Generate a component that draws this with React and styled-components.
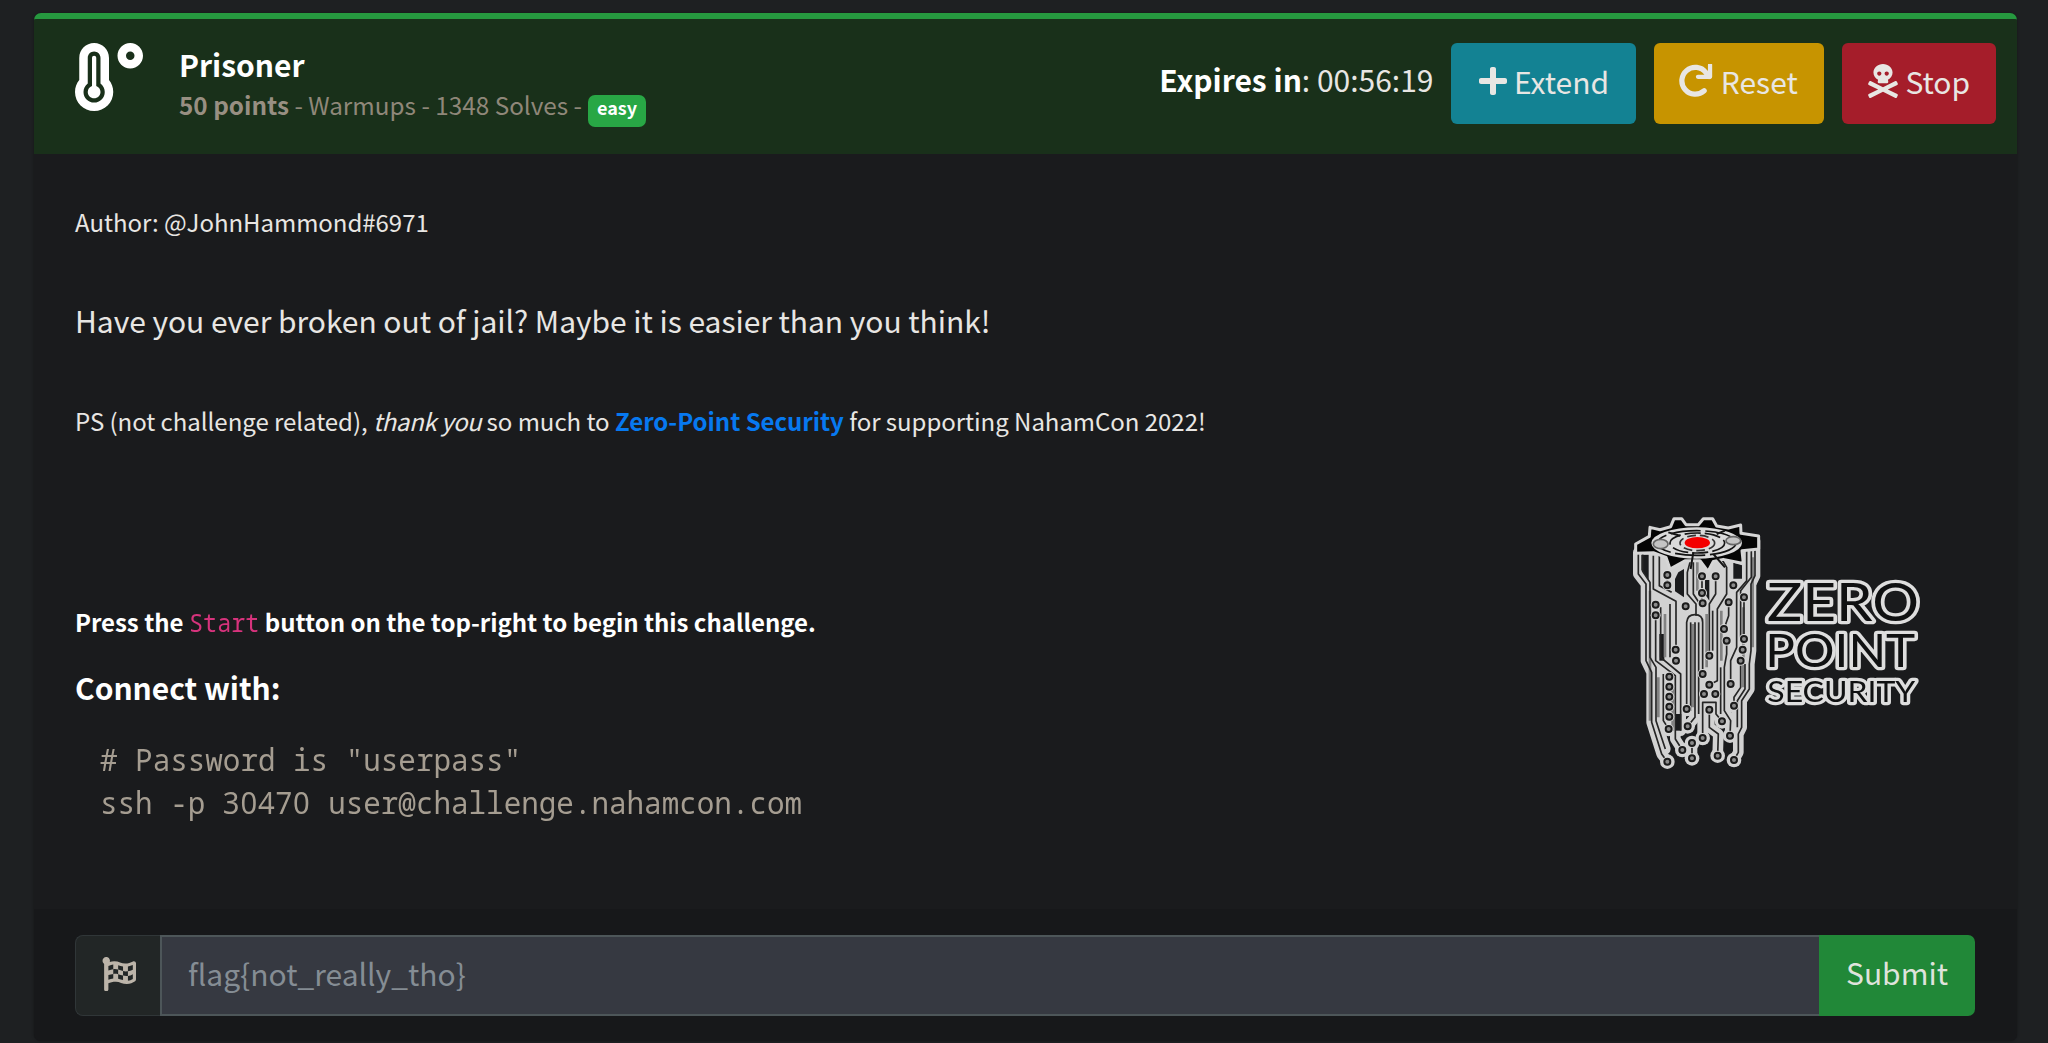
import React from "react";
import styled, { createGlobalStyle } from "styled-components";
import {
  FaTemperatureHigh,
  FaPlus,
  FaSkullCrossbones,
  FaFlagCheckered,
} from "react-icons/fa";

const GlobalStyle = createGlobalStyle`
  * { box-sizing: border-box; }
  body {
    margin: 0;
    height: 1043px;
    overflow: hidden;
    background: #1e2022;
    color: #e8e6e3;
    font-family: "Source Sans Pro", "Noto Sans CJK SC", sans-serif;
    font-size: 24px;
    line-height: 36px;
  }
`;

const Page = styled.main`
  height: 1043px;
  padding: 12.5px 31.5px 2px 33.5px;
`;

const Card = styled.article`
  display: flex;
  flex-direction: column;
  height: 100%;
  border-top: 6.5px solid #26983f;
  border-radius: 7px;
  background: #1a1b1d;
  box-shadow: 0 0 3px rgba(0, 0, 0, 0.35);
  overflow: hidden;
`;

const Header = styled.header`
  display: flex;
  align-items: flex-start;
  height: 135px;
  padding: 22.5px 20.5px 0 41px;
  background: #19301a;
`;

const Thermometer = styled(FaTemperatureHigh)`
  width: 68px;
  height: 68px;
  margin-top: 1.5px;
  color: #fff;
`;

const Heading = styled.div`
  flex: 1;
  padding: 1px 0 0 36.5px;
`;

const Title = styled.h3`
  margin: 0 0 1px;
  color: #fff;
  font-size: 30px;
  line-height: 44px;
`;

const Meta = styled.p`
  margin: 0;
  color: #8f8779;
  font-size: 24.3px;
  white-space: nowrap;
  strong { color: #988f82; }
`;

const Badge = styled.span`
  display: inline-block;
  margin-left: 1px;
  padding: 0 8.5px 7.5px;
  border-radius: 7px;
  background: #28a745;
  color: #fff;
  font-size: 18px;
  font-weight: 700;
  line-height: 24px;
`;

const Actions = styled.div`
  display: flex;
  align-items: center;
  gap: 17.5px;
  margin-top: 1.5px;
`;

const Expiry = styled.span`
  height: 81px;
  padding-top: 1px;
  font-size: 30px;
  line-height: 71px;
  white-space: nowrap;
  strong { color: #fff; }
`;

const ActionButton = styled.button`
  display: flex;
  align-items: center;
  justify-content: center;
  gap: ${(p) => p.$gap}px;
  width: ${(p) => p.$width}px;
  height: 81px;
  padding: 0 1px 4px 0;
  border: 0;
  border-radius: 6px;
  background: ${(p) => p.$tone};
  color: #e8e6e3;
  font: inherit;
  font-size: 30px;
  svg {
    width: ${(p) => p.$icon}px;
    height: ${(p) => p.$icon}px;
    margin-bottom: 1px;
  }
`;

const Body = styled.section`
  display: flex;
  justify-content: space-between;
  height: 755.5px;
  padding: 50px 93px 0 41.5px;
`;

const Copy = styled.div`
  white-space: nowrap;
`;

const Line = styled.p`
  margin: 0 0 ${(p) => p.$after}px;
  font-size: ${(p) => (p.$large ? 30 : 24)}px;
  line-height: ${(p) => (p.$large ? 44 : 36)}px;
  letter-spacing: -0.035px;
  color: ${(p) => (p.$bright ? "#fff" : "#e8e6e3")};
  font-weight: ${(p) => (p.$bright ? 700 : 400)};
  em { letter-spacing: -0.4px; }
`;

const SponsorLink = styled.a`
  color: #0779f0;
  font-weight: 700;
`;

const Keyword = styled.code`
  display: inline-block;
  margin-right: -5px;
  color: #d6337c;
  font: 400 25.2px "Noto Sans Mono", monospace;
  line-height: 1;
  letter-spacing: 0;
  transform: scaleX(0.932);
  transform-origin: left;
`;

const Snippet = styled.pre`
  margin: 0 0 0 25px;
  color: #a59d91;
  font: 31.5px "Noto Sans Mono", "DejaVu Sans Mono", monospace;
  line-height: 43.5px;
  transform: scaleX(0.9286);
  transform-origin: left;
`;

const SnippetLine = styled.div``;

const Port = styled.span`
  font-family: "Noto Sans", sans-serif;
  letter-spacing: 0.88px;
`;

const LogoDrawing = styled.svg`
  display: block;
  width: 293.3px;
  height: 256.7px;
  margin-top: 310px;
  filter: blur(0.4px);
`;

const LogoText = styled.text`
  fill: #101112;
  stroke: #dedede;
  stroke-width: ${(p) => p.$stroke}px;
  stroke-linejoin: round;
  paint-order: stroke;
  font: 400 ${(p) => p.$size}px Lato, sans-serif;
`;

const Footer = styled.footer`
  flex: 1;
  padding: 25.5px 41.5px 0;
  background: #17181a;
`;

const FlagForm = styled.div`
  display: flex;
  height: 81.5px;
`;

const FlagCell = styled.span`
  display: flex;
  align-items: center;
  justify-content: center;
  width: 85px;
  padding: 0 0 3px 2px;
  border: 1.5px solid #303638;
  border-right: 0;
  border-radius: 8px 0 0 8px;
  background: #222626;
  color: #bcb4a9;
  svg { width: 34px; height: 34px; }
`;

const FlagInput = styled.input`
  flex: 1;
  min-width: 0;
  padding: 0 0 5px 26px;
  border: 2px solid #4d5659;
  border-right: 0;
  border-radius: 0;
  outline: 0;
  background: #363941;
  color: #e8e6e3;
  font: inherit;
  font-size: 30px;
  &::placeholder { color: #858d94; opacity: 1; }
`;

const Submit = styled.button`
  width: 156px;
  padding: 0 0 7px;
  border: 0;
  border-radius: 0 7px 7px 0;
  background: #218838;
  color: #dfe3dc;
  font: inherit;
  font-size: 30px;
`;

function ResetIcon() {
  return (
    <svg viewBox="0 0 100 104" fill="none" stroke="currentColor">
      <path d="M75 82A41 41 0 1 1 80 26L90 38" strokeWidth="16" strokeLinecap="round" />
      <path d="M93 3V39H56" strokeWidth="13" strokeLinejoin="round" strokeLinecap="round" />
    </svg>
  );
}

const traces = [
  "M85 155V220L108 250V480L125 515V665L155 760L172 783",
  "M98 155V212L120 245V470L138 500V660L166 745",
  "M130 165V265L198 302V445",
  "M148 165V255L185 275",
  "M137 344V480L196 525V715L217 748",
  "M152 320V470L212 520V690",
  "M160 520V660L176 685",
  "M172 223V254",
  "M180 310V470",
  "M240 160V185L232 215V280L258 310V345",
  "M250 160V280L270 310",
  "M230 625V365Q232 342 255 342T278 365V520",
  "M255 365V650L233 677",
  "M242 365V630",
  "M266 365V640",
  "M276 227V308",
  "M317 227V280L298 310V465",
  "M308 330V450",
  "M335 175L350 200V280L322 325V540L298 552",
  "M356 305V345L342 385",
  "M350 420V460L343 500V630L362 660L360 705",
  "M332 500V640",
  "M410 150V240L380 275V440L362 480V550",
  "M424 150V230L392 270V420",
  "M402 290V415",
  "M392 480V560L372 590V615",
  "M435 120V225L423 250V450L418 490V565L395 600V680L385 700V755L372 778",
  "M405 490V565L382 600V680",
  "M298 627V680L325 700L323 765",
  "M278 712V605H318V640L336 662",
  "M246 727V773",
];

const nodes = [
  [172, 783], [197, 447], [198, 480], [137, 312], [137, 344], [217, 748], [172, 223],
  [172, 254], [230, 625], [278, 520], [233, 677], [227, 317], [276, 227], [276, 277],
  [278, 308], [317, 227], [298, 465], [298, 552], [356, 305], [342, 385], [350, 420],
  [360, 705], [370, 254], [362, 550], [402, 290], [402, 415], [398, 447], [392, 480],
  [372, 615], [372, 778], [178, 528], [178, 558], [178, 588], [178, 618], [178, 648],
  [176, 685], [282, 580], [316, 580], [298, 627], [323, 765], [278, 712], [336, 662],
  [246, 727], [246, 773],
];

function Logo() {
  return (
    <LogoDrawing viewBox="60 40 880 770" role="img" aria-label="Zero Point Security">
      <g fill="none" stroke="#d2d2d2" strokeWidth="32" strokeLinejoin="round" strokeLinecap="round">
        {traces.map((d) => <path key={d} d={d} />)}
      </g>
      <g fill="#d2d2d2">
        {nodes.map(([x, y]) => <circle key={`${x}-${y}`} cx={x} cy={y} r="22" />)}
        <path d="M76 150L445 150V225L432 280V450L416 490V570L400 600H362L300 650L200 640L120 600V510L103 470V250L76 215Z" />
      </g>
      <g fill="#1a1b1d">
        <path d="M94 162H116V238L94 208Z" />
        <path d="M205 215L222 205V290L195 272V235Z" />
        <path d="M370 186L396 194V234H370Z" />
        <path d="M285 238H298V300L285 280Z" />
        <path d="M148 400H163V480H148Z" />
        <path d="M198 640H214V690H198Z" />
      </g>
      <g fill="none" stroke="#828282" strokeWidth="8">
        <path d="M120 270V660M165 340V470M188 560V690M248 370V620M290 340V500M334 330V480M400 320V560M428 170V440M145 530V650M262 180V270" />
      </g>
      <g fill="none" stroke="#252525" strokeWidth="5" strokeLinejoin="round">
        {traces.map((d) => <path key={d} d={d} />)}
      </g>
      <g fill="#8b8b8b" stroke="#1b1b1b" strokeWidth="6">
        {nodes.map(([x, y]) => (
          <React.Fragment key={`${x}-${y}`}>
            <circle cx={x} cy={y} r="15" fill="#d8d8d8" stroke="none" />
            <circle cx={x} cy={y} r="9" />
          </React.Fragment>
        ))}
      </g>
      <path
        d="M77 130L118 107L120 80L150 87L182 78L192 54H215L228 72H265L280 54H308L320 76L355 82L392 73L393 98L446 106V145L396 150L400 188L340 176L310 182L294 212L270 180L225 180L180 205L168 170L130 156L77 158Z"
        fill="#050505" stroke="#d6d6d6" strokeWidth="9" strokeLinejoin="round"
      />
      <ellipse cx="260" cy="127" rx="136" ry="47" fill="#dadada" />
      <ellipse cx="260" cy="127" rx="118" ry="37" fill="none" stroke="#111" strokeWidth="5" strokeDasharray="90 14" />
      <ellipse cx="262" cy="127" rx="82" ry="30" fill="none" stroke="#151515" strokeWidth="5" strokeDasharray="48 12" />
      <ellipse cx="262" cy="127" rx="52" ry="23" fill="none" stroke="#333" strokeWidth="5" strokeDasharray="26 12" />
      <path d="M250 155L242 205M310 160L345 200M175 95L210 105M320 100L345 90M130 130H145M375 125H392" fill="none" stroke="#151515" strokeWidth="6" />
      <g fill="#c4c4c4" stroke="#666" strokeWidth="5">
        <ellipse cx="152" cy="130" rx="22" ry="14" />
        <ellipse cx="370" cy="120" rx="22" ry="12" />
      </g>
      <ellipse cx="262" cy="126" rx="38" ry="17" fill="#f40000" />
      <LogoText $size={158} $stroke={20} x="471" y="361" textLength="456" lengthAdjust="spacingAndGlyphs">ZERO</LogoText>
      <LogoText $size={137} $stroke={20} x="466" y="500" textLength="450" lengthAdjust="spacingAndGlyphs">POINT</LogoText>
      <LogoText $size={88} $stroke={19} x="472" y="604" textLength="444" lengthAdjust="spacingAndGlyphs">SECURITY</LogoText>
    </LogoDrawing>
  );
}

export default function App() {
  return (
    <>
      <GlobalStyle />
      <Page>
        <Card>
          <Header>
            <Thermometer />
            <Heading>
              <Title>Prisoner</Title>
              <Meta>
                <strong>50 points</strong> - Warmups - 1348 Solves - <Badge>easy</Badge>
              </Meta>
            </Heading>
            <Actions>
              <Expiry><strong>Expires in</strong>: 00:56:19</Expiry>
              <ActionButton $tone="#138293" $width={185} $icon={32} $gap={5}><FaPlus />Extend</ActionButton>
              <ActionButton $tone="#c79400" $width={170.5} $icon={34} $gap={8}><ResetIcon />Reset</ActionButton>
              <ActionButton $tone="#a51d2a" $width={154.5} $icon={34} $gap={5}><FaSkullCrossbones />Stop</ActionButton>
            </Actions>
          </Header>
          <Body>
            <Copy>
              <Line $after={58}>Author: @JohnHammond#6971</Line>
              <Line $large $after={61.5}>Have you ever broken out of jail? Maybe it is easier than you think!</Line>
              <Line $after={164.5}>
                PS (not challenge related), <em>thank you</em> so much to{" "}
                <SponsorLink>Zero-Point Security</SponsorLink> for supporting NahamCon 2022!
              </Line>
              <Line $bright $after={25}>
                Press the <Keyword>Start</Keyword> button on the top-right to begin this challenge.
              </Line>
              <Line $bright $large $after={28}>Connect with:</Line>
              <Snippet>
                <SnippetLine># Password is "userpass"</SnippetLine>
                <SnippetLine>ssh -p <Port>30470</Port> user@challenge.nahamcon.com</SnippetLine>
              </Snippet>
            </Copy>
            <Logo />
          </Body>
          <Footer>
            <FlagForm>
              <FlagCell><FaFlagCheckered /></FlagCell>
              <FlagInput placeholder="flag{not_really_tho}" />
              <Submit>Submit</Submit>
            </FlagForm>
          </Footer>
        </Card>
      </Page>
    </>
  );
}
